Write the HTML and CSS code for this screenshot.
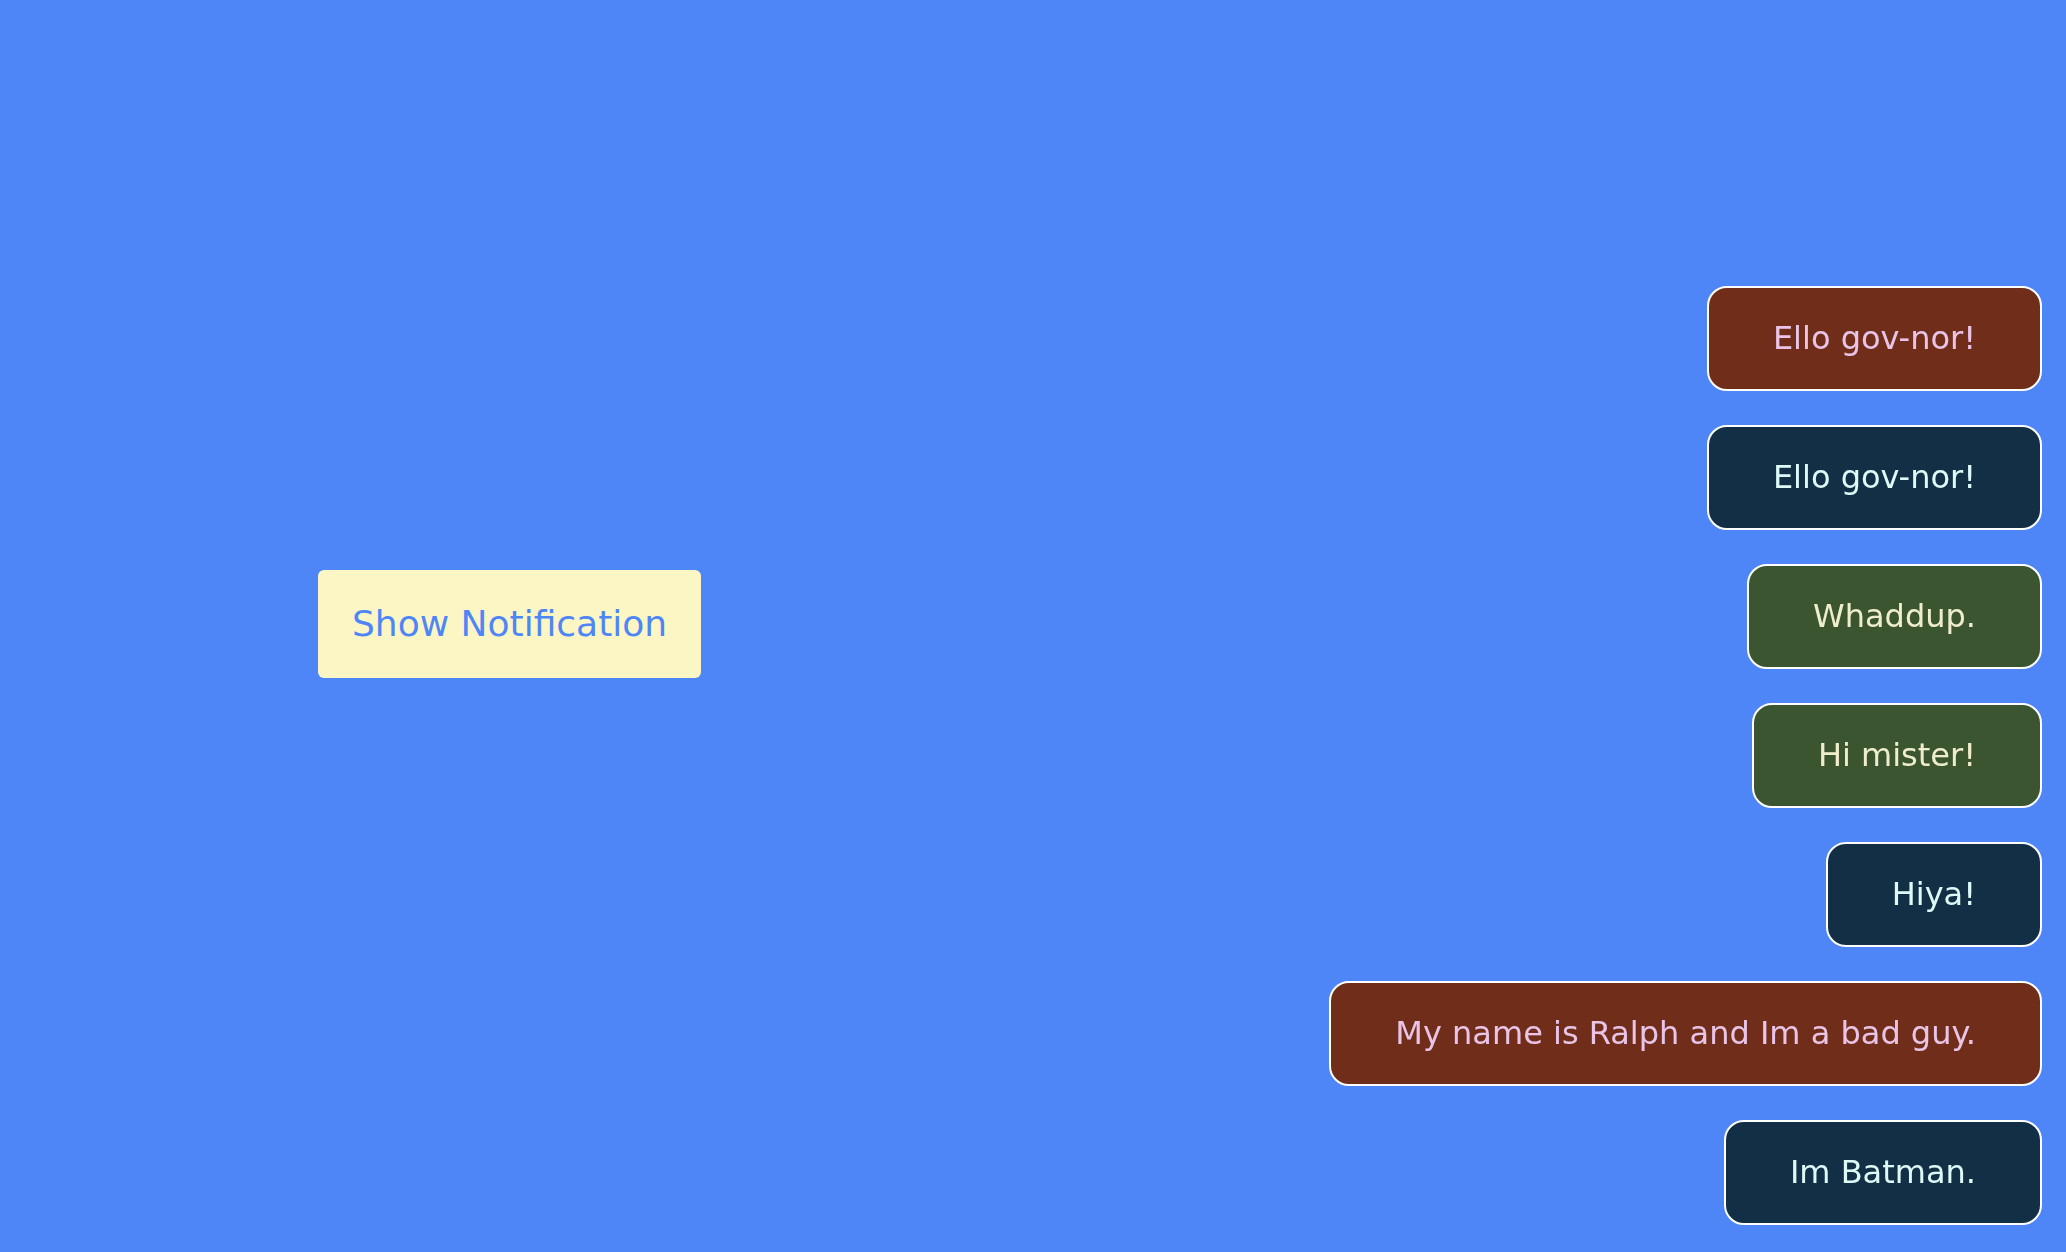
FILE: index.html
```html
<!DOCTYPE html>
<html lang="en">
<head>
<meta charset="utf-8">
<title>Notifications</title>
<link rel="stylesheet" href="styles.css">
</head>
<body>
<main class="stage">
  <button class="show-btn" type="button">Show Notification</button>
</main>
<div class="toasts">
  <div class="toast toast-brown">Ello gov-nor!</div>
  <div class="toast toast-navy">Ello gov-nor!</div>
  <div class="toast toast-green">Whaddup.</div>
  <div class="toast toast-green">Hi mister!</div>
  <div class="toast toast-navy">Hiya!</div>
  <div class="toast toast-brown">My name is Ralph and Im a bad guy.</div>
  <div class="toast toast-navy">Im Batman.</div>
</div>
</body>
</html>
```

FILE: styles.css
```css
html, body {
  margin: 0;
  padding: 0;
}

body {
  background: #4f86f7;
  font-family: "DejaVu Sans", "Open Sans", sans-serif;
  height: 100vh;
  overflow: hidden;
}

.stage {
  height: 100vh;
  box-sizing: border-box;
  display: flex;
  align-items: center;
  padding-left: 318px;
  padding-bottom: 4px;
}

.show-btn {
  background: #fcf6c4;
  color: #4f86f7;
  border: none;
  border-radius: 6px;
  font-family: inherit;
  font-size: 36px;
  line-height: 44px;
  padding: 32px 34px;
  cursor: pointer;
}

.toasts {
  position: fixed;
  right: 24px;
  bottom: 27px;
  display: flex;
  flex-direction: column;
  align-items: flex-end;
  gap: 34px;
}

.toast {
  border: 2px solid #ffffff;
  border-radius: 20px;
  padding: 32px 64px;
  font-size: 32px;
  line-height: 37px;
  white-space: nowrap;
}

.toast-brown {
  background: #702e1a;
  color: #e9c4e7;
}

.toast-navy {
  background: #122f46;
  color: #dff9f7;
}

.toast-green {
  background: #3b5531;
  color: #efedcc;
}
```
